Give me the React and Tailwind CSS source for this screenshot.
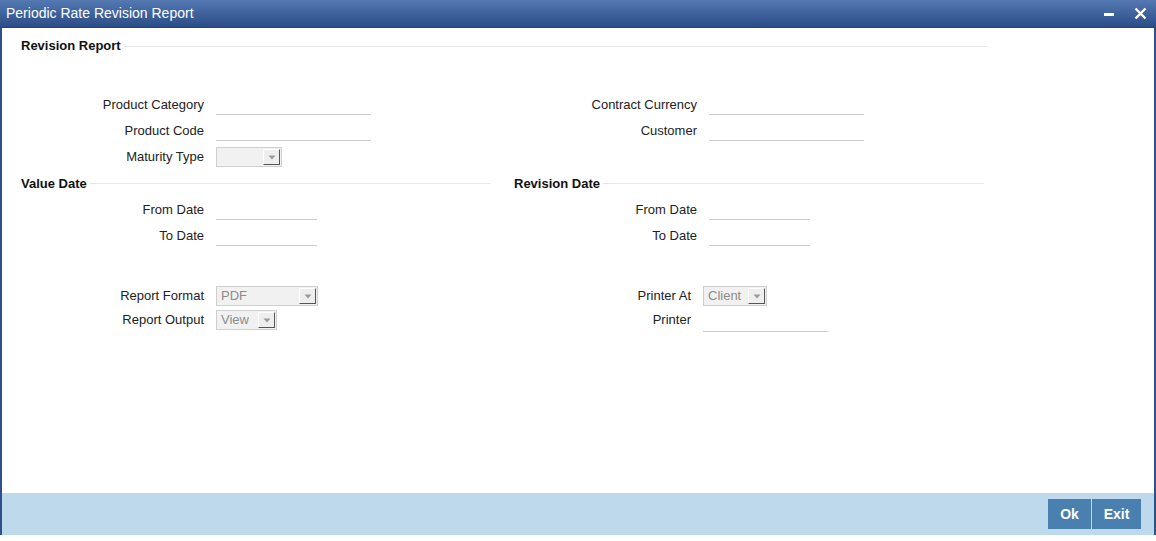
import React from 'react';

const Field = ({ label, width = 'w-[155px]', labelW = 'w-[202px]' }) => (
  <div className="flex items-center h-[26px]">
    <span className={`${labelW} text-right text-[13px] text-[#222]`}>{label}</span>
    <div className={`${width} h-[20px] ml-[12px] border-b border-[#cccccc]`} />
  </div>
);

const Select = ({ value, width }) => (
  <div className={`${width} h-[20px] ml-[12px] flex items-stretch border border-[#cfcfcf] bg-[#f1f1f1]`}>
    <span className="flex-1 pl-[4px] text-[13px] leading-[18px] text-[#8c8c8c]">{value}</span>
    <div className="w-[17px] my-[1px] mr-[1px] flex items-center justify-center bg-[#eeeeee] border-t border-l border-t-white border-l-white border-r border-b border-r-[#555] border-b-[#555]">
      <svg width="8" height="5" viewBox="0 0 8 5">
        <path d="M0.5 0.5 L7.5 0.5 L4 4.5 Z" fill="#9a9a9a" />
      </svg>
    </div>
  </div>
);

const SelectRow = ({ label, value, width, labelW = 'w-[202px]' }) => (
  <div className="flex items-center h-[24px]">
    <span className={`${labelW} text-right text-[13px] text-[#222]`}>{label}</span>
    <Select value={value} width={width} />
  </div>
);

const Heading = ({ title, className = '' }) => (
  <div className={`flex items-center ${className}`}>
    <span className="text-[13px] font-bold text-[#111] whitespace-nowrap">{title}</span>
    <div className="flex-1 h-px bg-[#e6e6e6] ml-[3px]" />
  </div>
);

export default function App() {
  return (
    <div className="w-[1156px] h-[541px] bg-white" style={{ fontFamily: '"Liberation Sans", Arial, sans-serif' }}>
      <div className="h-[535px] flex flex-col border-x-2 border-[#2f5089]">
        <div className="h-[28px] -mx-[2px] flex items-center justify-between bg-gradient-to-b from-[#5479b1] to-[#2b4c88] border-b border-[#254378]">
          <span className="pl-[6px] text-white text-[14px]">Periodic Rate Revision Report</span>
          <div className="flex items-center pr-[9px]">
            <div className="w-[10px] h-[3px] bg-white mr-[20px] mt-[1px]" />
            <svg width="13" height="13" viewBox="0 0 13 13">
              <path d="M1.5 1.5 L11.5 11.5 M11.5 1.5 L1.5 11.5" stroke="white" strokeWidth="2.4" />
            </svg>
          </div>
        </div>

        <div className="flex-1 flex flex-col pt-[9px]">
          <Heading title="Revision Report" className="h-[18px] pl-[19px] w-[985px]" />

          <div className="flex mt-[37px]">
            <div className="w-[493px] flex flex-col">
              <Field label="Product Category" />
              <Field label="Product Code" />
              <div className="flex items-center h-[26px]">
                <span className="w-[202px] text-right text-[13px] text-[#222]">Maturity Type</span>
                <Select value="" width="w-[66px]" />
              </div>
            </div>
            <div className="flex flex-col">
              <Field label="Contract Currency" />
              <Field label="Customer" />
            </div>
          </div>

          <div className="flex h-[27px]">
            <Heading title="Value Date" className="w-[493px] pl-[19px] pr-[5px]" />
            <Heading title="Revision Date" className="w-[489px] pl-[19px]" />
          </div>

          <div className="flex">
            <div className="w-[493px] flex flex-col">
              <Field label="From Date" width="w-[101px]" />
              <Field label="To Date" width="w-[101px]" />
            </div>
            <div className="flex flex-col">
              <Field label="From Date" width="w-[101px]" />
              <Field label="To Date" width="w-[101px]" />
            </div>
          </div>

          <div className="flex mt-[35px]">
            <div className="w-[493px] flex flex-col">
              <SelectRow label="Report Format" value="PDF" width="w-[102px]" />
              <SelectRow label="Report Output" value="View" width="w-[61px]" />
            </div>
            <div className="flex flex-col">
              <SelectRow label="Printer At" value="Client" width="w-[64px]" labelW="w-[196px]" />
              <div className="flex items-center h-[24px]">
                <span className="w-[196px] text-right text-[13px] text-[#222]">Printer</span>
                <div className="w-[125px] h-[20px] mt-[4px] ml-[12px] border-b border-[#cccccc]" />
              </div>
            </div>
          </div>
        </div>

        <div className="h-[42px] bg-[#bed9ec] flex items-center justify-end pr-[13px]">
          <button className="w-[43px] h-[30px] bg-[#4a80b0] text-white text-[14px] font-bold">Ok</button>
          <button className="w-[49px] h-[30px] ml-px bg-[#4a80b0] text-white text-[14px] font-bold">Exit</button>
        </div>
      </div>
    </div>
  );
}
